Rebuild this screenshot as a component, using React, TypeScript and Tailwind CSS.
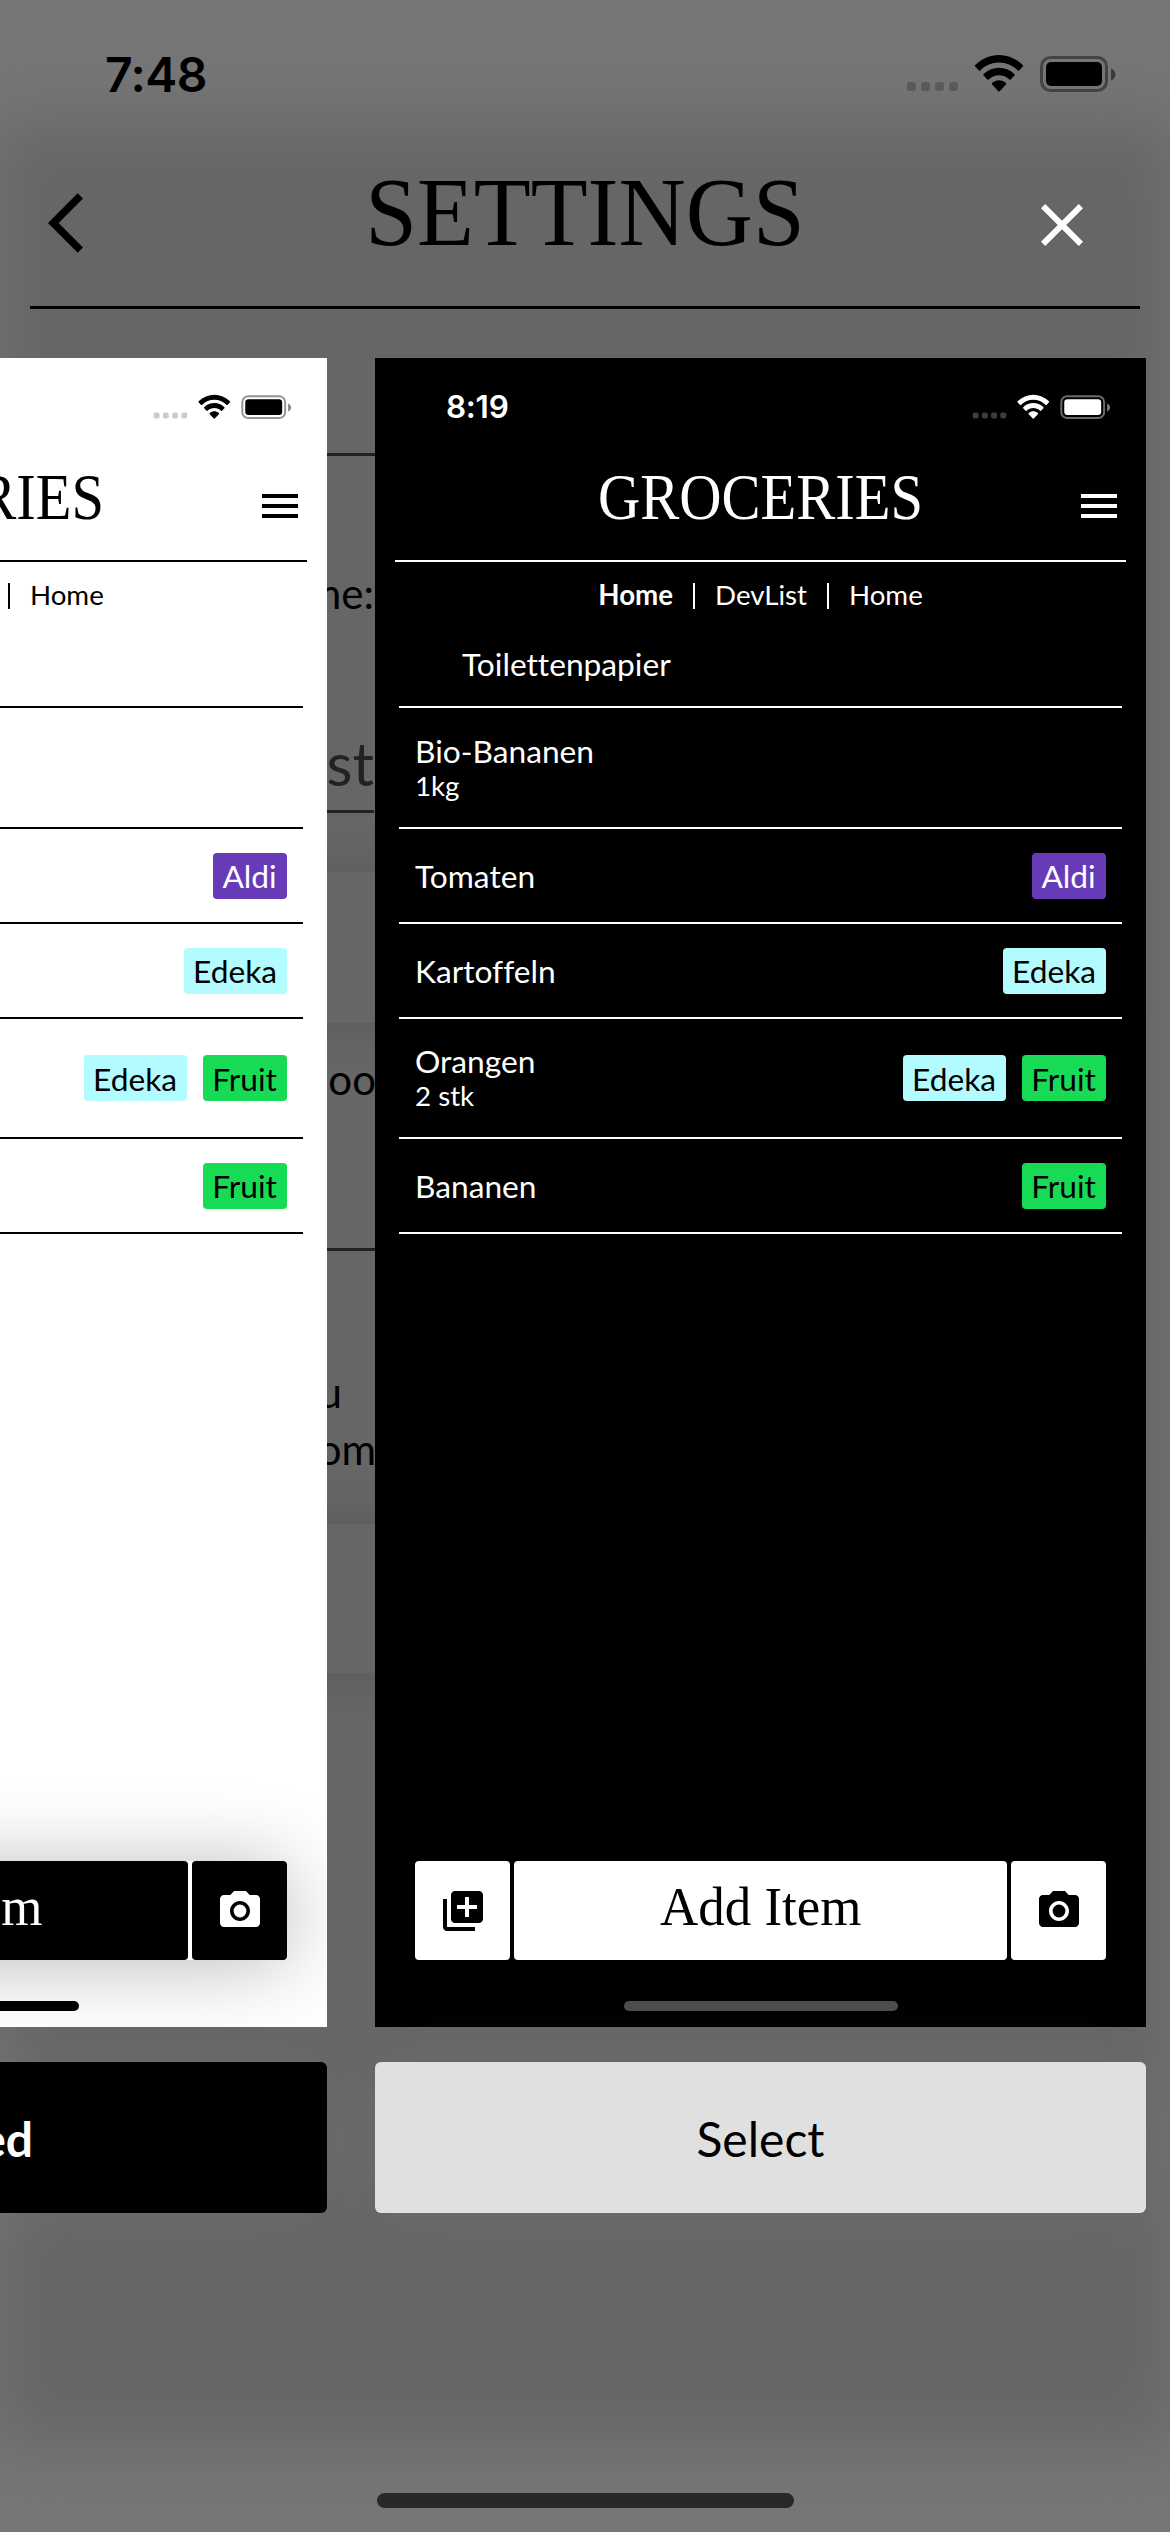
import React from "react";
import { MdClose, MdLibraryAdd, MdMenu, MdPhotoCamera } from "react-icons/md";

const rows = [
  { name: "Bio-Bananen", amount: "1kg", tags: [], height: "h-[121px]" },
  { name: "Tomaten", tags: ["Aldi"], height: "h-[95px]" },
  { name: "Kartoffeln", tags: ["Edeka"], height: "h-[95px]" },
  { name: "Orangen", amount: "2 stk", tags: ["Edeka", "Fruit"], height: "h-[120px]" },
  { name: "Bananen", tags: ["Fruit"], height: "h-[95px]" },
];

const tagStyles: Record<string, string> = {
  Aldi: "bg-[#673ab7] text-white w-[74px]",
  Edeka: "bg-[#b2fbff] text-black w-[103px]",
  Fruit: "bg-[#18db55] text-black w-[84px]",
};

function StatusIcons({ className, dots }: { className: string; dots: number }) {
  return (
    <svg viewBox="0 0 210 40" className={className} fill="currentColor">
      <g opacity={dots}>
        {[1, 15, 29, 43].map((x) => (
          <rect key={x} x={x} y="28" width="9" height="9" rx="3" />
        ))}
      </g>
      <path
        transform="translate(69 1.3) scale(2.84 3)"
        d="M8.46 2.42c2.46 0 4.83.94 6.61 2.64.13.13.35.13.48 0l1.28-1.3c.07-.07.11-.16.11-.25 0-.1-.04-.19-.1-.25-4.69-4.49-12.07-4.49-16.76 0-.07.06-.11.16-.11.25 0 .1.04.19.11.25l1.28 1.3c.13.13.35.13.48 0C3.63 3.36 6 2.42 8.46 2.42zm0 4.22c1.35 0 2.65.5 3.65 1.41.14.13.35.13.48 0l1.28-1.3c.07-.07.11-.16.11-.26 0-.1-.04-.19-.11-.25-3.05-2.84-7.77-2.84-10.82 0-.07.06-.11.16-.11.25 0 .1.04.19.11.26l1.28 1.3c.13.13.35.13.48 0 1-.91 2.3-1.41 3.65-1.41zm2.55 2.84c0 .1-.04.19-.11.26l-2.2 2.24c-.07.07-.15.1-.24.1s-.18-.03-.24-.1L6.02 9.74c-.07-.07-.11-.17-.1-.27 0-.1.05-.19.12-.25 1.4-1.2 3.44-1.2 4.84 0 .07.06.12.15.12.25z"
      />
      <rect x="135.5" y="3.5" width="65" height="33" rx="9" fill="none" stroke="currentColor" strokeWidth="3" opacity="0.42" />
      <path d="M205 14.5c3 1.2 4.4 3.4 4.4 6s-1.4 4.8-4.4 6z" opacity="0.5" />
      <rect x="140" y="8" width="56" height="24" rx="5" />
    </svg>
  );
}

function ThemeCard({ dark }: { dark: boolean }) {
  const button = dark ? "bg-white text-black" : "bg-black text-white";
  const line = dark ? "border-white" : "border-black";
  return (
    <div
      className={`flex h-[1669px] flex-col overflow-hidden ${dark ? "bg-black text-white" : "bg-white text-black"}`}
    >
      <div className="flex h-[80px] items-start justify-between pt-[36px] pr-[36px] pl-[71px]">
        <span className="mt-[-1px] font-['Inter',sans-serif] text-[31.5px] leading-[28px] font-semibold tracking-[-0.3px]">
          8:19
        </span>
        <StatusIcons className="h-[26.4px] w-[138.4px]" dots={dark ? 0.24 : 0.2} />
      </div>
      <div className={`mx-[20px] grid h-[124px] grid-cols-[64px_1fr_64px] items-start border-b-2 ${line}`}>
        <span />
        <h2 className="mt-[23px] scale-x-[0.9] text-center font-['Liberation_Serif',serif] text-[65px] leading-[72px] whitespace-nowrap">
          GROCERIES
        </h2>
        <MdMenu className="mt-[44px] ml-[13px] size-[48px]" />
      </div>
      <div className="flex h-[68px] items-center justify-center gap-5 text-[27.7px] leading-[34px]">
        <span className="mt-[-2px] font-bold">Home</span>
        <span className={`h-[26px] border-l-2 ${line}`} />
        <span className="mt-[-2px]">DevList</span>
        <span className={`h-[26px] border-l-2 ${line}`} />
        <span className="mt-[-2px]">Home</span>
      </div>
      <div className="mx-[24px] flex flex-col text-[31.7px] leading-[35px]">
        <div className={`h-[78px] border-b-2 pt-[17px] pl-[63px] ${line}`}>Toilettenpapier</div>
        {rows.map((row) => (
          <div key={row.name} className={`flex items-center justify-between border-b-2 px-[16px] ${row.height} ${line}`}>
            <div className="flex flex-col pt-[1px]">
              <span>{row.name}</span>
              {row.amount && <span className="text-[27.7px] leading-[34px]">{row.amount}</span>}
            </div>
            <div className="flex gap-4">
              {row.tags.map((tag) => (
                <span
                  key={tag}
                  className={`flex h-[46px] items-center justify-center rounded-[4px] pt-[2px] pr-[1px] ${tagStyles[tag]}`}
                >
                  {tag}
                </span>
              ))}
            </div>
          </div>
        ))}
      </div>
      <div
        className={`mx-[40px] mt-auto mb-[41px] flex h-[99px] gap-1 ${dark ? "" : "shadow-[0_4px_80px_rgba(0,0,0,0.28)]"}`}
      >
        <div className={`flex w-[95px] items-center justify-center rounded-[4px] ${button}`}>
          <MdLibraryAdd className="size-[48px]" />
        </div>
        <div className={`flex flex-1 items-center justify-center rounded-[4px] pb-[8px] ${button}`}>
          <span className="scale-x-[0.98] font-['Liberation_Serif',serif] text-[54px] leading-[60px]">Add Item</span>
        </div>
        <div className={`flex w-[95px] items-center justify-center rounded-[4px] ${button}`}>
          <MdPhotoCamera className="size-[48px]" />
        </div>
      </div>
      <div className={`mx-auto mb-[16px] h-[10px] w-[274px] rounded-full ${dark ? "bg-[#4d4d4d]" : "bg-black"}`} />
    </div>
  );
}

function SettingsScreen() {
  return (
    <div className="flex h-full flex-col text-[42px] leading-[57px] text-black">
      <div className="flex h-[150px] items-start justify-between pt-[54px] pr-[54px] pl-[105px]">
        <span className="mt-[-3px] font-['Inter',sans-serif] text-[48px] leading-[48px] font-semibold tracking-[-0.5px]">
          7:48
        </span>
        <StatusIcons className="h-[40px] w-[210px]" dots={0.22} />
      </div>
      <div className="mx-[30px] flex h-[159px] items-start justify-between border-b-[3px] border-black">
        <svg viewBox="0 0 12 24" className="mt-[37px] ml-[18px] h-[72px] w-[36px]" fill="currentColor">
          <path d="M11.67 3.87L9.9 2.1 0 12l9.9 9.9 1.77-1.77L3.54 12z" />
        </svg>
        <h1 className="mt-[9px] scale-x-[0.96] font-['Liberation_Serif',serif] text-[97px] leading-[108px]">
          SETTINGS
        </h1>
        <span className="w-[54px]" />
      </div>
      <div className="mx-[30px] h-[147px] border-b-[3px] border-[#222]" />
      <div className="flex h-[357px] w-[374px] flex-col items-end border-b-[3px] border-[#222] pt-[109px]">
        <span>Name:</span>
        <span className="mt-[101px] text-[60px] leading-[80px] text-[#222]">List</span>
      </div>
      <div className="mt-[59px] ml-[60px] h-[151px] w-[1050px] bg-[#666] shadow-[0_0_50px_rgba(0,0,0,0.13)]" />
      <div className="flex h-[228px] w-[376px] flex-col items-end border-b-[3px] border-[#222] pt-[28px]">
        <span>oo</span>
      </div>
      <div className="flex h-[273px] w-[376px] flex-col items-end pt-[113px]">
        <span className="mr-[34px]">u</span>
        <span>om</span>
      </div>
      <div className="ml-[60px] h-[149px] w-[1050px] bg-[#666] shadow-[0_0_50px_rgba(0,0,0,0.13)]" />
      <div className="mx-auto mt-auto mb-[24px] h-[15px] w-[417px] rounded-full bg-[#292929]" />
    </div>
  );
}

export default function App() {
  return (
    <div className="relative h-[2532px] w-[1170px] overflow-hidden bg-[#767676] font-['Lato',sans-serif] [font-variant-ligatures:none]">
      <div className="absolute inset-x-[-6px] top-[122px] bottom-[88px] bg-[#666] blur-[32px]" />
      <div className="absolute inset-0">
        <SettingsScreen />
      </div>

      <div className="absolute inset-0 flex flex-col">
        <div className="flex h-[358px] justify-end pt-[189px] pr-[72px]">
          <MdClose className="size-[72px] text-white" />
        </div>
        <div className="ml-[-444px] flex w-[1590px] gap-[48px]">
          <div className="flex w-[771px] flex-col gap-[35px]">
            <ThemeCard dark={false} />
            <div className="flex h-[151px] items-center justify-center rounded-[6px] bg-black pt-[2px] text-[48px] font-bold text-white shadow-[0_0_80px_rgba(255,255,255,0.05)]">
              Selected
            </div>
          </div>
          <div className="flex w-[771px] flex-col gap-[35px]">
            <ThemeCard dark />
            <div className="flex h-[151px] items-center justify-center rounded-[6px] bg-[#e0e0e0] pt-[2px] text-[48px] text-black shadow-[0_0_80px_rgba(255,255,255,0.05)]">
              Select
            </div>
          </div>
        </div>
      </div>
    </div>
  );
}
